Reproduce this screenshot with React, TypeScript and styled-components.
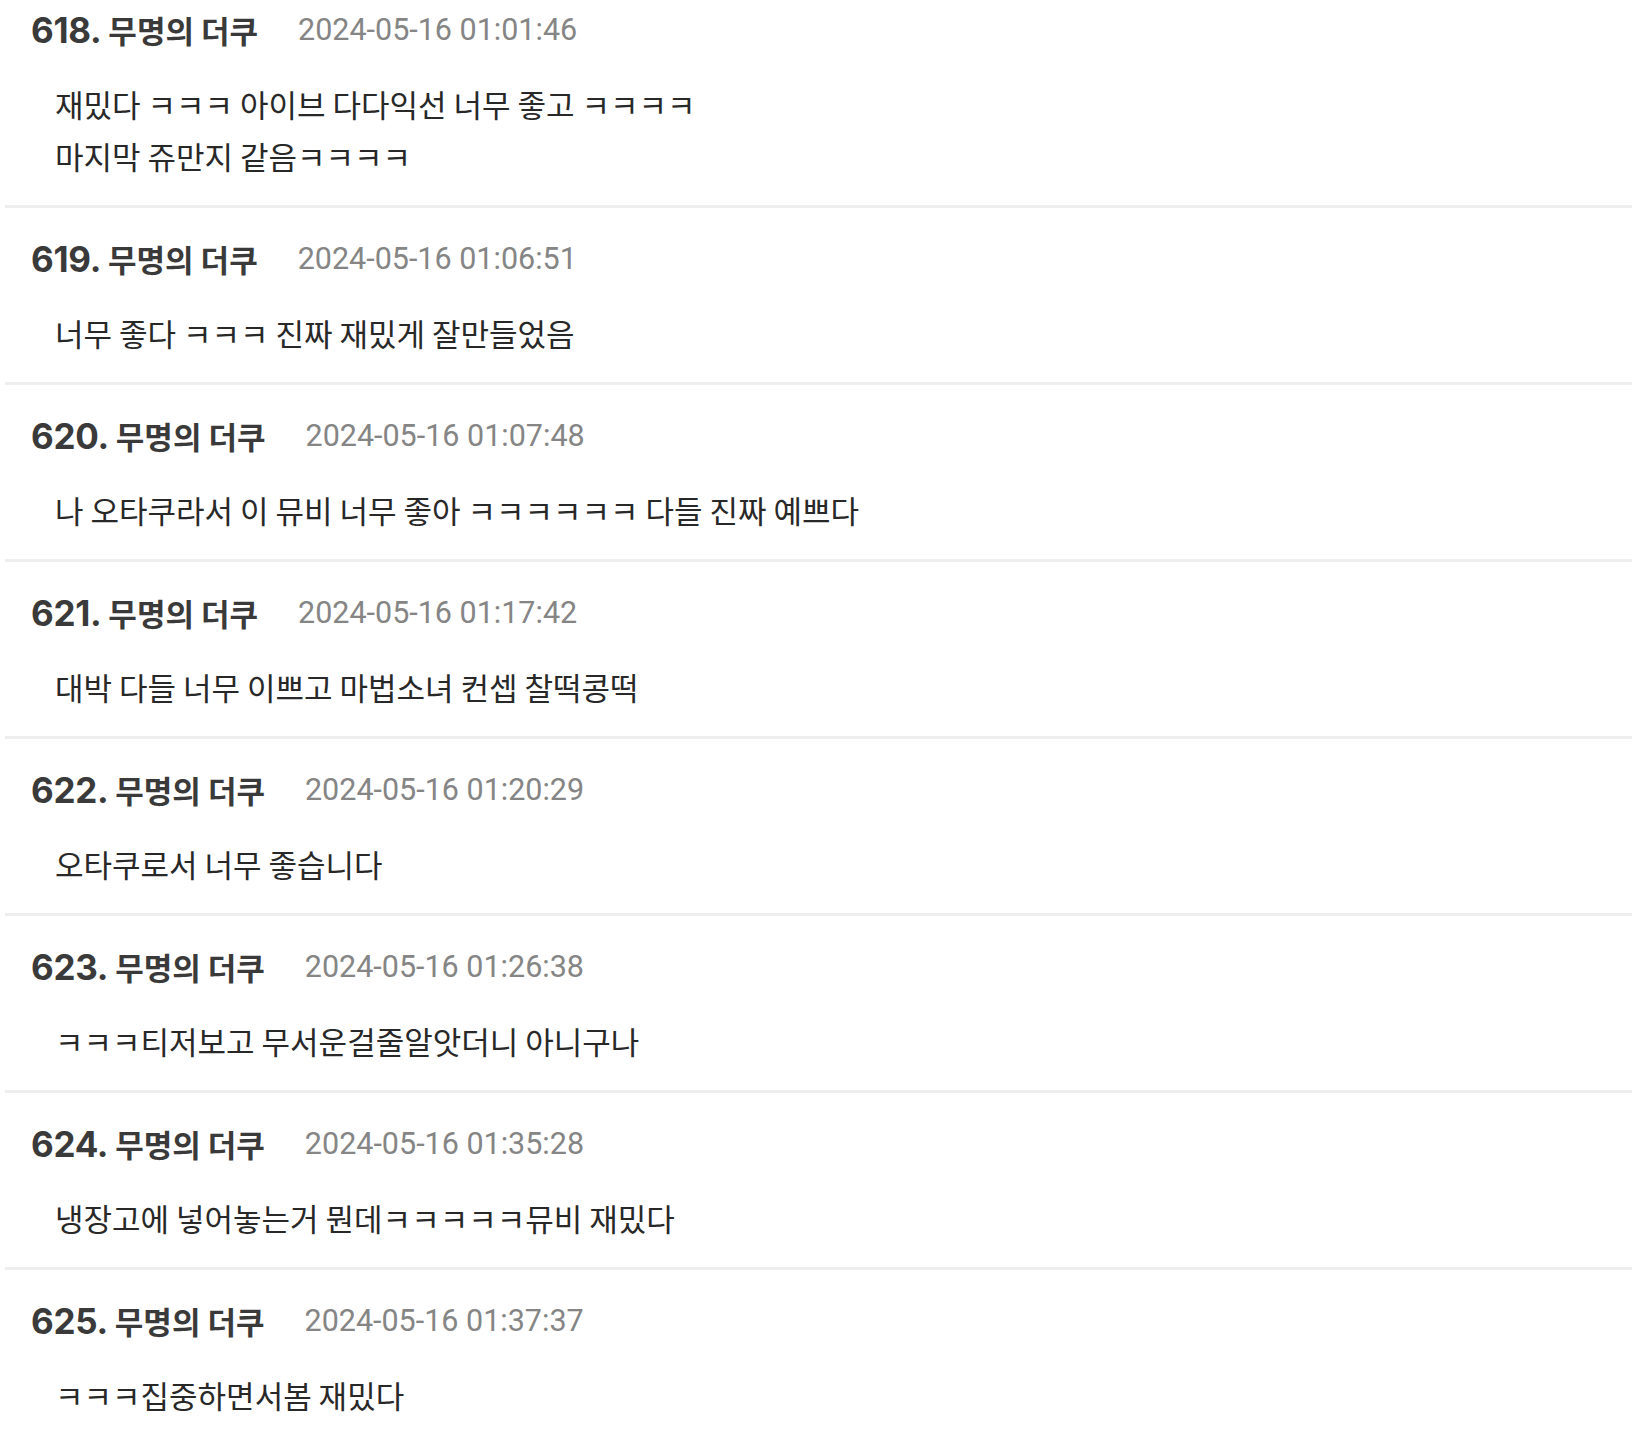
import React from "react";
import styled, { createGlobalStyle } from "styled-components";

const GlobalStyle = createGlobalStyle`
  html, body {
    margin: 0;
    padding: 0;
    background: #ffffff;
    overflow: hidden;
  }
  body {
    font-family: "Noto Sans CJK KR", "Noto Sans", sans-serif;
  }
`;

type Comment = {
  no: number;
  name: string;
  date: string;
  text: string;
};

const comments: Comment[] = [
  {
    no: 618,
    name: "무명의 더쿠",
    date: "2024-05-16 01:01:46",
    text: "재밌다 ㅋㅋㅋ 아이브 다다익선 너무 좋고 ㅋㅋㅋㅋ\n마지막 쥬만지 같음ㅋㅋㅋㅋ",
  },
  {
    no: 619,
    name: "무명의 더쿠",
    date: "2024-05-16 01:06:51",
    text: "너무 좋다 ㅋㅋㅋ 진짜 재밌게 잘만들었음",
  },
  {
    no: 620,
    name: "무명의 더쿠",
    date: "2024-05-16 01:07:48",
    text: "나 오타쿠라서 이 뮤비 너무 좋아 ㅋㅋㅋㅋㅋㅋ 다들 진짜 예쁘다",
  },
  {
    no: 621,
    name: "무명의 더쿠",
    date: "2024-05-16 01:17:42",
    text: "대박 다들 너무 이쁘고 마법소녀 컨셉 찰떡콩떡",
  },
  {
    no: 622,
    name: "무명의 더쿠",
    date: "2024-05-16 01:20:29",
    text: "오타쿠로서 너무 좋습니다",
  },
  {
    no: 623,
    name: "무명의 더쿠",
    date: "2024-05-16 01:26:38",
    text: "ㅋㅋㅋ티저보고 무서운걸줄알앗더니 아니구나",
  },
  {
    no: 624,
    name: "무명의 더쿠",
    date: "2024-05-16 01:35:28",
    text: "냉장고에 넣어놓는거 뭔데ㅋㅋㅋㅋㅋ뮤비 재밌다",
  },
  {
    no: 625,
    name: "무명의 더쿠",
    date: "2024-05-16 01:37:37",
    text: "ㅋㅋㅋ집중하면서봄 재밌다",
  },
];

const List = styled.ul`
  list-style: none;
  margin: 0 0 0 5px;
  padding: 0;
  display: flex;
  flex-direction: column;
`;

const Item = styled.li`
  display: flex;
  flex-direction: column;
  gap: 23px;
  padding: 24px 0 23px 0;
  border-top: 3px solid #eeeeee;

  &:first-child {
    border-top: none;
    padding-top: 3px;
  }
`;

const Header = styled.div`
  display: flex;
  align-items: center;
  gap: 40px;
  height: 52px;
  padding-left: 26px;
`;

const Author = styled.div`
  display: flex;
  align-items: baseline;
  gap: 7px;
  color: #3a3a3a;
  font-weight: 700;
  white-space: nowrap;
`;

const Number = styled.span`
  font-family: "Inter", "Roboto", sans-serif;
  font-size: 35px;
  font-weight: 700;
  letter-spacing: -0.3px;
`;

const Name = styled.span`
  font-family: "Noto Sans CJK KR", "Noto Sans", sans-serif;
  font-size: 31px;
  font-weight: 700;
`;

const DateText = styled.span`
  font-family: "Roboto", "Inter", sans-serif;
  font-size: 30.5px;
  color: #858585;
  white-space: nowrap;
`;

const Body = styled.p`
  margin: 0;
  padding-left: 50px;
  font-family: "Noto Sans CJK KR", "Noto Sans", sans-serif;
  font-size: 31px;
  line-height: 52px;
  color: #282828;
  white-space: pre-line;
`;

export default function App() {
  return (
    <>
      <GlobalStyle />
      <List>
        {comments.map((c) => (
          <Item key={c.no}>
            <Header>
              <Author>
                <Number>{c.no}.</Number>
                <Name>{c.name}</Name>
              </Author>
              <DateText>{c.date}</DateText>
            </Header>
            <Body>{c.text}</Body>
          </Item>
        ))}
      </List>
    </>
  );
}
